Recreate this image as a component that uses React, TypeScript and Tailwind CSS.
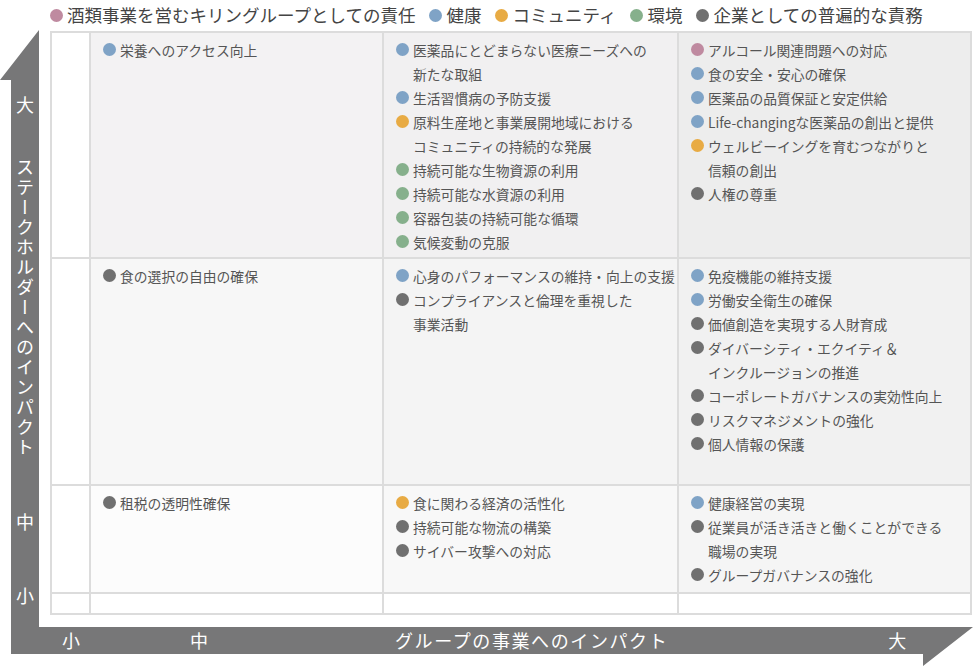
const C = {
  p: "bg-[#bf8aa0]",
  b: "bg-[#7fa3c6]",
  o: "bg-[#e8ab44]",
  g: "bg-[#86b08c]",
  k: "bg-[#707070]",
};

type Item = [keyof typeof C, string[]];

const cells: { bg: string; items: Item[] }[][] = [
  [
    { bg: "bg-white", items: [] },
    { bg: "bg-[#f3f2f3]", items: [["b", ["栄養へのアクセス向上"]]] },
    {
      bg: "bg-[#f1f0f1]",
      items: [
        ["b", ["医薬品にとどまらない医療ニーズへの", "新たな取組"]],
        ["b", ["生活習慣病の予防支援"]],
        ["o", ["原料生産地と事業展開地域における", "コミュニティの持続的な発展"]],
        ["g", ["持続可能な生物資源の利用"]],
        ["g", ["持続可能な水資源の利用"]],
        ["g", ["容器包装の持続可能な循環"]],
        ["g", ["気候変動の克服"]],
      ],
    },
    {
      bg: "bg-[#ededed]",
      items: [
        ["p", ["アルコール関連問題への対応"]],
        ["b", ["食の安全・安心の確保"]],
        ["b", ["医薬品の品質保証と安定供給"]],
        ["b", ["Life-changingな医薬品の創出と提供"]],
        ["o", ["ウェルビーイングを育むつながりと", "信頼の創出"]],
        ["k", ["人権の尊重"]],
      ],
    },
  ],
  [
    { bg: "bg-white", items: [] },
    { bg: "bg-[#f7f7f7]", items: [["k", ["食の選択の自由の確保"]]] },
    {
      bg: "bg-[#f4f4f4]",
      items: [
        ["b", ["心身のパフォーマンスの維持・向上の支援"]],
        ["k", ["コンプライアンスと倫理を重視した", "事業活動"]],
      ],
    },
    {
      bg: "bg-[#f1f1f1]",
      items: [
        ["b", ["免疫機能の維持支援"]],
        ["b", ["労働安全衛生の確保"]],
        ["k", ["価値創造を実現する人財育成"]],
        ["k", ["ダイバーシティ・エクイティ＆", "インクルージョンの推進"]],
        ["k", ["コーポレートガバナンスの実効性向上"]],
        ["k", ["リスクマネジメントの強化"]],
        ["k", ["個人情報の保護"]],
      ],
    },
  ],
  [
    { bg: "bg-white", items: [] },
    { bg: "bg-[#fcfcfc]", items: [["k", ["租税の透明性確保"]]] },
    {
      bg: "bg-[#f8f8f8]",
      items: [
        ["o", ["食に関わる経済の活性化"]],
        ["k", ["持続可能な物流の構築"]],
        ["k", ["サイバー攻撃への対応"]],
      ],
    },
    {
      bg: "bg-[#f5f5f5]",
      items: [
        ["b", ["健康経営の実現"]],
        ["k", ["従業員が活き活きと働くことができる", "職場の実現"]],
        ["k", ["グループガバナンスの強化"]],
      ],
    },
  ],
  [
    { bg: "bg-white", items: [] },
    { bg: "bg-white", items: [] },
    { bg: "bg-white", items: [] },
    { bg: "bg-white", items: [] },
  ],
];

const legend: [keyof typeof C, string][] = [
  ["p", "酒類事業を営むキリングループとしての責任"],
  ["b", "健康"],
  ["o", "コミュニティ"],
  ["g", "環境"],
  ["k", "企業としての普遍的な責務"],
];

export default function App() {
  return (
    <div
      className="relative w-[973px] h-[666px] bg-white overflow-hidden text-[#555]"
      style={{ fontFamily: '"Noto Sans CJK JP", "Noto Sans", sans-serif' }}
    >
      <svg className="absolute left-0 top-0" width="973" height="666">
        <polygon
          points="11,654 11,80 0,80 39,30 39,627 11,627"
          fill="#777778"
        />
        <polygon
          points="11,627 973,627 923,666 923,654 11,654"
          fill="#777778"
        />
      </svg>

      <div className="relative flex items-center gap-[14px] h-[31px] pl-[50px] text-[17.5px] text-[#444]">
        {legend.map(([c, t]) => (
          <div key={t} className="flex items-center gap-[4px]">
            <span className={`w-[13px] h-[13px] rounded-full ${C[c]}`} />
            <span>{t}</span>
          </div>
        ))}
      </div>

      <div className="relative flex">
        <div className="w-[50px] flex flex-col items-center px-[11px] text-white text-[18px] leading-[20px]">
          <span className="mt-[63px]">大</span>
          <span className="mt-[44px] [writing-mode:vertical-rl] tracking-[2px]">
            ステークホルダーへのインパクト
          </span>
          <span className="mt-[53px]">中</span>
          <span className="mt-[54px]">小</span>
        </div>

        <div className="grid grid-cols-[37px_291px_293px_291px] grid-rows-[224px_225px_106px_19px] gap-[2px] p-[2px] bg-[#dcdcdc] w-[922px] h-[584px]">
          {cells.flat().map((cell, i) => (
            <div key={i} className={`${cell.bg} pl-[12px] pt-[5px] text-[13.8px] leading-[24px]`}>
              {cell.items.map(([c, lines], j) => (
                <div key={j} className="flex gap-[4px]">
                  <span className={`mt-[5px] w-[13px] h-[13px] rounded-full shrink-0 ${C[c]}`} />
                  <div>
                    {lines.map((l) => (
                      <div key={l}>{l}</div>
                    ))}
                  </div>
                </div>
              ))}
            </div>
          ))}
        </div>
      </div>

      <div className="relative flex items-center h-[27px] mt-[12px] text-white text-[18px]">
        <span className="ml-[62px]">小</span>
        <span className="ml-[110px]">中</span>
        <span className="ml-[187px] tracking-[1.6px]">グループの事業へのインパクト</span>
        <span className="ml-[220px]">大</span>
      </div>
    </div>
  );
}
